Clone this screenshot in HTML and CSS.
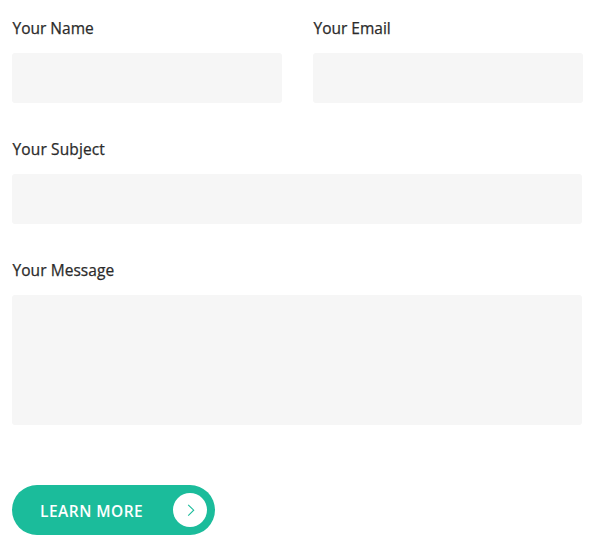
FILE: index.html
```html
<!DOCTYPE html>
<html lang="en">
<head>
<meta charset="utf-8">
<title>Contact form</title>
<link rel="stylesheet" href="styles.css">
</head>
<body>
<form class="contact-form">
  <div class="row">
    <div class="field">
      <label class="label label-name" for="name">Your Name</label>
      <input class="control" id="name" type="text">
    </div>
    <div class="field">
      <label class="label label-email" for="email">Your Email</label>
      <input class="control" id="email" type="email">
    </div>
  </div>
  <div class="field">
    <label class="label label-subject" for="subject">Your Subject</label>
    <input class="control" id="subject" type="text">
  </div>
  <div class="field">
    <label class="label label-message" for="message">Your Message</label>
    <textarea class="control message" id="message"></textarea>
  </div>
  <button class="button" type="button">
    <span class="button-text">LEARN MORE</span>
    <span class="button-icon">
      <svg width="34" height="34" viewBox="0 0 34 34" fill="none" stroke="#1bbc9b" stroke-width="1.1"><path d="M15.2 11.8 20.7 17.2 15.2 22.6"/></svg>
    </span>
  </button>
</form>
</body>
</html>
```
FILE: styles.css
```css
* {
  box-sizing: border-box;
}

body {
  margin: 0;
  background: #fff;
  font-family: "Open Sans", "Noto Sans", sans-serif;
}

.contact-form {
  width: 570px;
  margin: 16px 0 0 12px;
}

.row {
  display: grid;
  grid-template-columns: 270px 270px;
  column-gap: 31px;
}

.field {
  display: flex;
  flex-direction: column;
  margin-bottom: 34px;
}

.label {
  height: 24px;
  margin-bottom: 13px;
  padding-left: 0.5px;
  font-size: 15.5px;
  line-height: 24px;
  color: #2b2b2b;
  white-space: nowrap;
  -webkit-text-stroke: 0.25px #2b2b2b;
}

.label-subject {
  letter-spacing: 0.13px;
}

.label-message {
  letter-spacing: 0.06px;
}

.control {
  display: block;
  width: 100%;
  height: 50px;
  padding: 0 15px;
  border: 0;
  border-radius: 3px;
  background: #f6f6f6;
  font: inherit;
  resize: none;
}

.message {
  height: 130px;
  margin-bottom: 26px;
}

.button {
  display: flex;
  align-items: center;
  justify-content: space-between;
  width: 203px;
  height: 50px;
  padding: 0 8px 0 28px;
  border: 0;
  border-radius: 25px;
  background: #1bbc9b;
  color: #fff;
  font: 600 15.5px/24px "Open Sans", "Noto Sans", sans-serif;
}

.button-text {
  padding-top: 1px;
  letter-spacing: 0.48px;
  white-space: nowrap;
}

.button-icon {
  display: flex;
  width: 34px;
  height: 34px;
  border-radius: 50%;
  background: #fff;
}
```
